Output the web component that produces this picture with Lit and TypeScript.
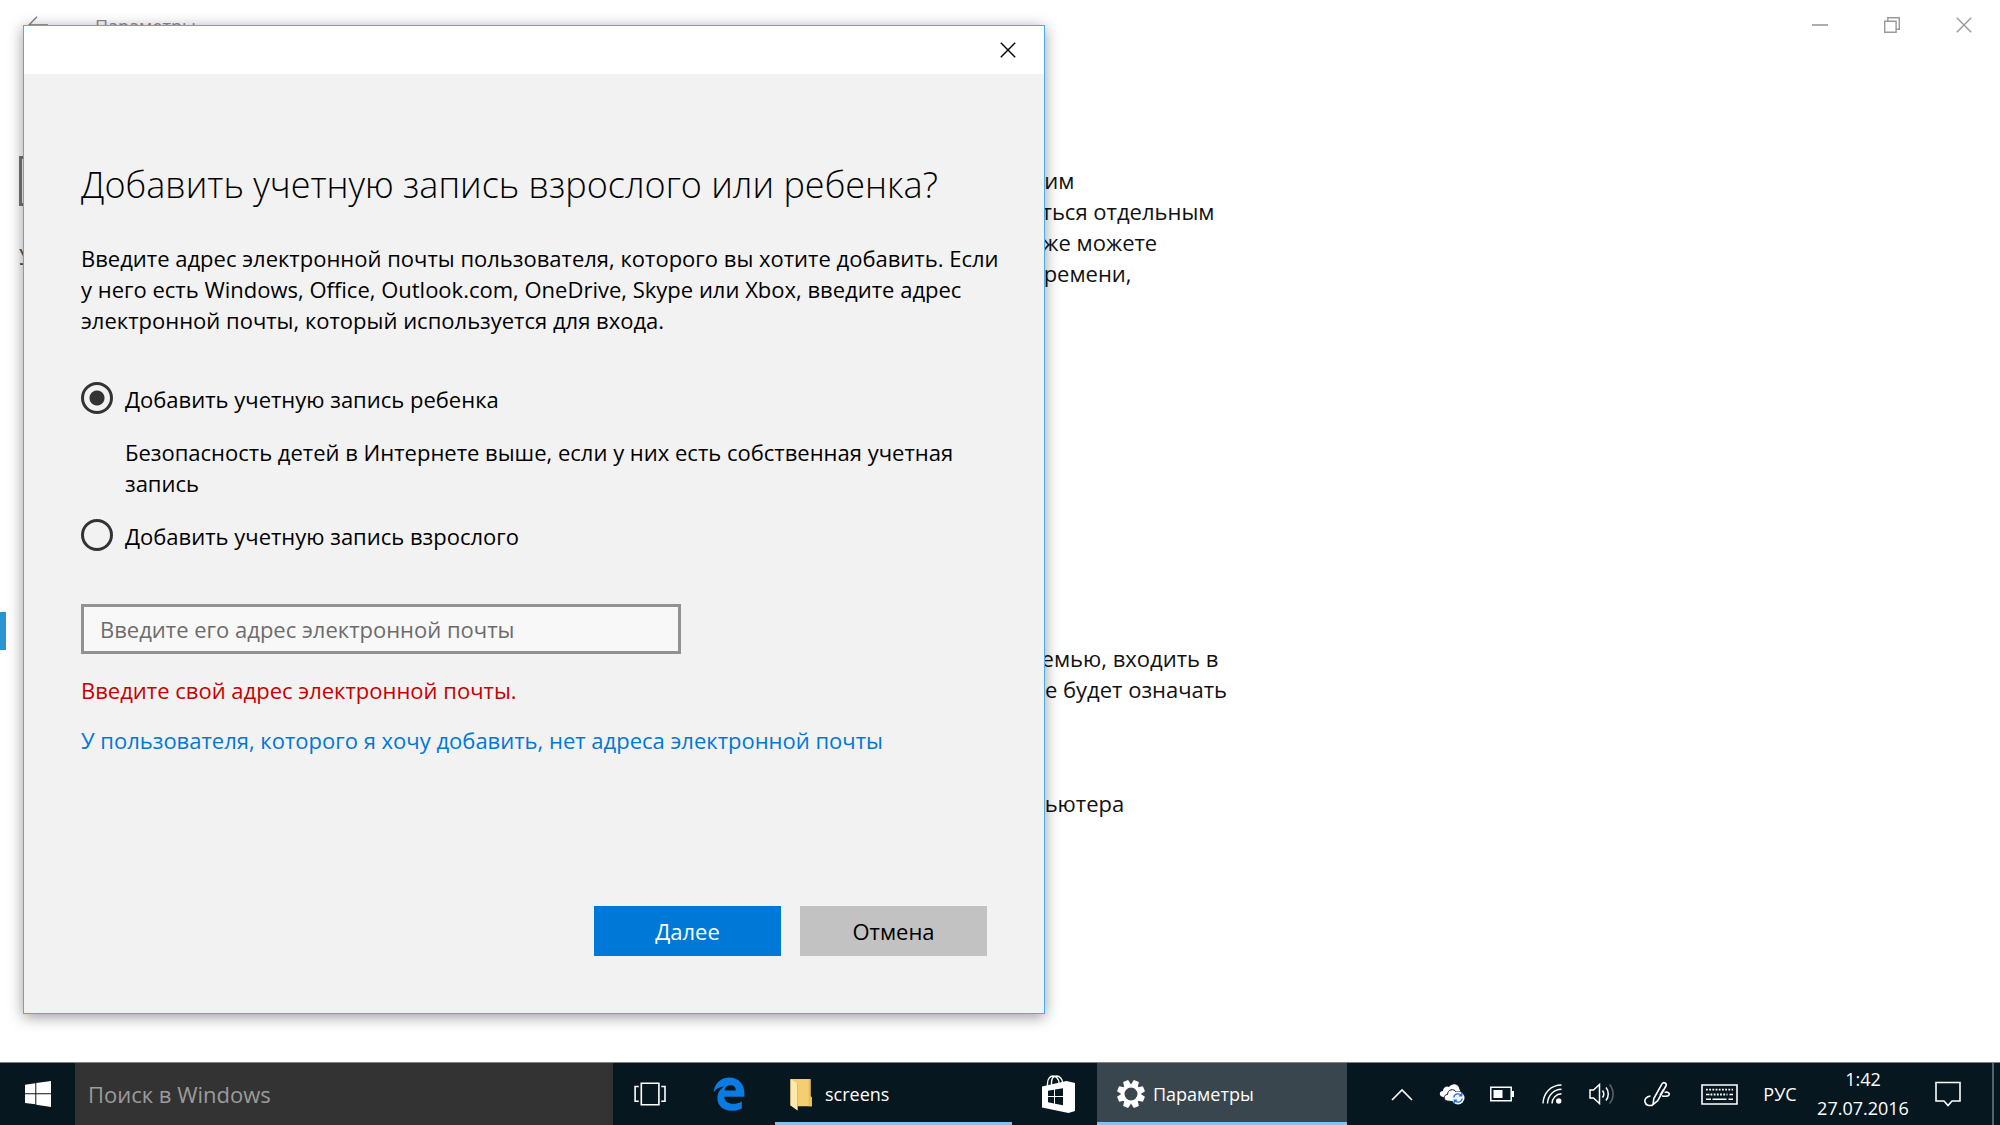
import { LitElement, html, css, svg } from "lit";
import { customElement, state } from "lit/decorators.js";

const closeIcon = html`<svg class="glyph" width="16" height="16" viewBox="0 0 16 16" aria-hidden="true">
  <path d="M.8.8 15.2 15.2M15.2.8.8 15.2" fill="none" stroke="currentColor" stroke-width="1.4" />
</svg>`;

@customElement("settings-window")
class SettingsWindow extends LitElement {
  static styles = css`
    :host {
      display: flex;
      flex-direction: column;
      height: 100%;
      background: #fff;
      font-size: 22px;
      line-height: 31px;
      color: #111;
    }
    .title-bar {
      display: flex;
      align-items: center;
      height: 50px;
      color: #8c8c8c;
      font-size: 18px;
    }
    .title-bar button {
      display: flex;
      align-items: center;
      justify-content: center;
      width: 72px;
      height: 50px;
      padding: 0;
      border: 0;
      background: none;
      color: #999;
    }
    .title-bar .back {
      width: 75px;
      color: #808080;
    }
    .title {
      flex: 1;
      margin: 0 0 0 20px;
      padding-top: 2px;
      font-size: 18px;
      font-weight: 400;
    }
    .columns {
      display: grid;
      grid-template-columns: 1031px 1fr;
    }
    .nav {
      padding-top: 106px;
    }
    .find {
      display: block;
      box-sizing: border-box;
      width: 480px;
      height: 50px;
      margin-left: 19px;
      border: 3px solid #777;
      background: #fff;
    }
    .section {
      margin: 35px 0 0 19px;
      font-size: 22px;
      font-weight: 400;
      color: #555;
    }
    .current {
      width: 6px;
      height: 38px;
      margin-top: 340px;
      background: #2a93d0;
    }
    .content {
      padding-top: 115px;
      white-space: nowrap;
    }
    .content p {
      margin: 0;
    }
    .content .others {
      margin-top: 354px;
    }
    .content .device {
      margin-top: 83px;
    }
  `;

  render() {
    return html`
      <header class="title-bar">
        <button class="back" aria-label="Назад">
          <svg width="20" height="18" viewBox="0 0 20 18" aria-hidden="true">
            <path d="M9 .8.9 9 9 17.2M1 9h19" fill="none" stroke="currentColor" stroke-width="1.4" />
          </svg>
        </button>
        <h1 class="title">Параметры</h1>
        <button aria-label="Свернуть">
          <svg width="16" height="16" viewBox="0 0 16 16" aria-hidden="true">
            <path d="M0 8h16" stroke="currentColor" stroke-width="1.6" />
          </svg>
        </button>
        <button aria-label="Свернуть в окно">
          <svg width="16" height="16" viewBox="0 0 16 16" aria-hidden="true">
            <path d="M.7 4.2h11.4v11.1H.7zM3.8 4V.8h11.5v11.4h-3" fill="none" stroke="currentColor" stroke-width="1.4" />
          </svg>
        </button>
        <button aria-label="Закрыть">${closeIcon}</button>
      </header>
      <div class="columns">
        <nav class="nav">
          <input class="find" type="search" aria-label="Найти параметр" />
          <h2 class="section">У</h2>
          <div class="current"></div>
        </nav>
        <main class="content">
          <p>оим<br />сться отдельным<br />кже можете<br />времени,</p>
          <p class="others">семью, входить в<br />не будет означать</p>
          <p class="device">пьютера</p>
        </main>
      </div>
    `;
  }
}

@customElement("account-dialog")
class AccountDialog extends LitElement {
  @state() private kind = "child";

  static styles = css`
    :host {
      display: block;
      box-sizing: border-box;
      border: 1px solid #4aaee8;
      background: #f2f2f2;
      box-shadow: 0 3px 14px rgba(0, 0, 0, 0.4);
      font-size: 22px;
      line-height: 31px;
      color: #000;
    }
    .bar {
      display: flex;
      justify-content: flex-end;
      background: #fff;
    }
    .close {
      display: flex;
      align-items: center;
      justify-content: center;
      width: 72px;
      height: 48px;
      padding: 0;
      border: 0;
      background: none;
      color: #000;
    }
    .body {
      padding: 87px 57px 57px;
    }
    h2 {
      margin: 0 0 34px;
      font-size: 36px;
      line-height: 48px;
      font-weight: 300;
    }
    p {
      margin: 0;
    }
    .intro {
      margin-right: -36px;
    }
    .choices {
      margin: 48px 0 52px;
      padding: 0;
      border: 0;
    }
    .choice {
      display: flex;
      align-items: center;
      gap: 12px;
    }
    .choice input {
      appearance: none;
      box-sizing: border-box;
      flex: none;
      width: 32px;
      height: 32px;
      margin: -4px 0 0;
      border: 3px solid #333;
      border-radius: 50%;
    }
    .choice input:checked {
      background: radial-gradient(circle, #333 7px, transparent 8px);
    }
    .hint {
      margin: 22px 0 22px 44px;
    }
    .mail {
      display: block;
      box-sizing: border-box;
      width: 600px;
      max-width: 100%;
      height: 50px;
      padding: 0 16px;
      border: 3px solid #929292;
      border-radius: 0;
      background: #f8f8f8;
      font: inherit;
      color: #000;
    }
    .mail::placeholder {
      color: #6c6c6c;
      opacity: 1;
    }
    .error {
      margin: 21px 0 19px;
      color: #c80000;
    }
    a {
      color: #0078d7;
      text-decoration: none;
    }
    .actions {
      display: flex;
      justify-content: flex-end;
      gap: 19px;
      margin-top: 150px;
    }
    .actions button {
      width: 187px;
      height: 50px;
      padding: 0;
      border: 0;
      background: #c2c2c2;
      font: inherit;
      color: #000;
    }
    .actions .primary {
      background: #0078d7;
      color: #fff;
    }
  `;

  private pick(kind: string) {
    this.kind = kind;
  }

  render() {
    return html`
      <div class="bar"><button class="close" aria-label="Закрыть">${closeIcon}</button></div>
      <form class="body" @submit=${(e: Event) => e.preventDefault()}>
        <h2>Добавить учетную запись взрослого или ребенка?</h2>
        <p class="intro">
          Введите адрес электронной почты пользователя, которого вы хотите добавить. Если<br />
          у него есть Windows, Office, Outlook.com, OneDrive, Skype или Xbox, введите адрес<br />
          электронной почты, который используется для входа.
        </p>
        <fieldset class="choices" aria-label="Тип учетной записи">
          <label class="choice">
            <input type="radio" name="kind" .checked=${this.kind === "child"} @change=${() => this.pick("child")} />
            Добавить учетную запись ребенка
          </label>
          <p class="hint">Безопасность детей в Интернете выше, если у них есть собственная учетная запись</p>
          <label class="choice">
            <input type="radio" name="kind" .checked=${this.kind === "adult"} @change=${() => this.pick("adult")} />
            Добавить учетную запись взрослого
          </label>
        </fieldset>
        <input
          class="mail"
          type="email"
          aria-label="Введите его адрес электронной почты"
          placeholder="Введите его адрес электронной почты"
        />
        <p class="error">Введите свой адрес электронной почты.</p>
        <a href="#no-mail">У пользователя, которого я хочу добавить, нет адреса электронной почты</a>
        <div class="actions">
          <button class="primary" type="submit">Далее</button>
          <button type="button">Отмена</button>
        </div>
      </form>
    `;
  }
}

/* A gear outline with eight teeth around a ring. */
const teeth = [0, 45, 90, 135, 180, 225, 270, 315].map(
  (a) => svg`<path d="M-3.6-9 -2.7-14h5.4l.9 5z" transform="rotate(${a + 22.5})" />`
);

@customElement("task-bar")
class TaskBar extends LitElement {
  static styles = css`
    :host {
      display: flex;
      height: 62px;
      border-top: 1px solid #7d8387;
      background: #071720;
      color: #fff;
      font-size: 18px;
      line-height: 29px;
    }
    button {
      display: flex;
      align-items: center;
      justify-content: center;
      flex: none;
      box-sizing: border-box;
      height: 62px;
      padding: 0;
      border: 0;
      background: none;
      color: inherit;
      font: inherit;
    }
    .start {
      width: 75px;
    }
    .search {
      flex: 0 1 538px;
      box-sizing: border-box;
      min-width: 120px;
      height: 62px;
      padding: 0 13px;
      border: 0;
      border-radius: 0;
      background: #333;
      color: #fff;
      font: inherit;
      font-size: 22px;
    }
    .search::placeholder {
      color: #9b9b9b;
      opacity: 1;
    }
    .view {
      width: 74px;
    }
    .edge {
      width: 84px;
    }
    .store {
      width: 85px;
    }
    .app {
      justify-content: flex-start;
      border-bottom: 3px solid #76c7f7;
      padding-top: 3px;
    }
    .folder {
      width: 237px;
      gap: 12px;
      margin-left: 4px;
      padding-left: 15px;
    }
    .settings {
      width: 250px;
      gap: 8px;
      padding-left: 20px;
      background: #3a464d;
    }
    .tray {
      display: flex;
      flex: none;
      margin-left: auto;
    }
    .tray button {
      width: 50px;
    }
    .tray .pen,
    .tray .notes {
      width: 60px;
    }
    .tray .keys {
      width: 65px;
    }
    .tray .lang {
      width: 56px;
    }
    .tray .clock {
      width: 110px;
      flex-direction: column;
    }
    .tray .desktop {
      width: 8px;
      margin-left: 14px;
      border-left: 2px solid #56626a;
    }
  `;

  render() {
    return html`
      <button class="start" aria-label="Пуск">
        <svg width="26" height="26" viewBox="0 0 26 26" fill="#fff" aria-hidden="true">
          <path d="M0 3.8 10.3 2.3v10H0zM11.3 2.1 26 0v12.3H11.3zM0 13.3h10.3v10L0 21.9zM11.3 13.3H26V26l-14.7-2.2z" />
        </svg>
      </button>
      <input class="search" type="search" aria-label="Поиск в Windows" placeholder="Поиск в Windows" />
      <button class="view" aria-label="Представление задач">
        <svg width="32" height="24" viewBox="0 0 32 24" fill="none" stroke="#fff" stroke-width="1.6" aria-hidden="true">
          <path d="M7.3 1.3h17.6v21.4H7.3zM4.8 4.5H1.1v14.7h3.7M27.3 4.5H31v14.7h-3.7" />
        </svg>
      </button>
      <button class="edge" aria-label="Microsoft Edge">
        <svg width="32" height="34" viewBox="0 0 32 34" fill="#0a7be0" aria-hidden="true">
          <path
            d="M.5 15.2C1.7 6.3 8 .6 16.2.6c9.300 0 15.200 6.500 15.200 15.500v3.700H11.300c.4 5 4 7 8.800 7 3.300 0 6.200-.9 8.700-2.300v7c-2.800 1.500-6.100 2.300-9.900 2.300C10 33.800 4.400 28.500 4.400 21c0-5.200 2.500-9 6.800-11.600C6.500 9.700 3 11.800.5 15.200zM11.400 13.600h11.400c0-3.600-1.800-5.300-5.100-5.300-3.500 0-5.700 2-6.300 5.300z"
          />
        </svg>
      </button>
      <button class="app folder">
        <svg width="23" height="33" viewBox="0 0 23 33" aria-hidden="true">
          <path d="M.5 1h20v17.500l1.500 1v8.700H7.500L.5 27.500z" fill="#f3cf72" />
          <path d="M20.500 18v-17l-2 0v27.200h3.500v-8.700z" fill="#eabf5c" />
          <path d="M.5 1 7.500 5.500v27L.5 27.500z" fill="#ffe9a8" />
          <path d="M7.500 5.500v27" stroke="#dcae48" stroke-width=".7" />
        </svg>
        screens
      </button>
      <button class="store" aria-label="Магазин">
        <svg width="42" height="38" viewBox="0 0 42 38" aria-hidden="true">
          <path
            d="M13.500 12V8.500C13.500 4 16 1 19 1s6 3 6 7M17.500 10V8c0-4.500 2-7 5-7 3.200 0 6 3 6 7"
            fill="none" stroke="#fff" stroke-width="1.400"
          />
          <path d="M8 11.500 32.500 6 41 8v28l-6.500 2L8 32.500z" fill="#fff" />
          <path
            d="m14 15.700 6-1v6.400h-6zM21 14.500l8-1.300v7.900h-8zM14 22h6v6.500l-6-1.200zM21 22h8v8.200l-8-1.500z"
            fill="#071720"
          />
        </svg>
      </button>
      <button class="app settings">
        <svg width="28" height="28" viewBox="-14 -14 28 28" fill="#fff" aria-hidden="true">
          <circle r="8.300" fill="none" stroke="#fff" stroke-width="3.600" />
          ${teeth}
        </svg>
        Параметры
      </button>
      <div class="tray">
        <button aria-label="Отображать скрытые значки">
          <svg width="22" height="13" viewBox="0 0 22 13" aria-hidden="true">
            <path d="M1 12 11 2l10 10" fill="none" stroke="#fff" stroke-width="1.600" />
          </svg>
        </button>
        <button aria-label="OneDrive">
          <svg width="26" height="22" viewBox="0 0 26 22" aria-hidden="true">
            <path d="M4 14C-.5 13 0 8 4 8c0-4 4-5.500 6-4 3-4 9-3.500 10 1l2 5-12 6z" fill="#fff" />
            <path
              d="M8 18c-4-1-3.500-6.500.5-6.500C8.500 6.500 15 5 17 9c4-1.500 7 1 6.500 4L18 19z"
              fill="#fff" stroke="#071720" stroke-width="1"
            />
            <circle cx="19" cy="15" r="6.500" fill="#f4f7fb" />
            <path
              d="M14.800 14.500c.6-4 5.600-4.800 7.600-2M23.200 15.500c-.6 4-5.600 4.800-7.600 2M22.800 9.800v3h-3M15.200 20.200v-3h3"
              fill="none" stroke="#2474d8" stroke-width="1.300"
            />
          </svg>
        </button>
        <button aria-label="Батарея">
          <svg width="24" height="16" viewBox="0 0 24 16" aria-hidden="true">
            <path d="M.8 1.300h20.400v13.400H.8z" fill="none" stroke="#fff" stroke-width="1.500" />
            <path d="M3.500 4h9v8h-9zM21.500 5H24v6h-2.500z" fill="#fff" />
          </svg>
        </button>
        <button aria-label="Сеть">
          <svg width="20" height="20" viewBox="0 0 20 20" aria-hidden="true">
            <path
              d="M1 19.500C1.300 9 9 1 19.500 1M5.500 19.500C5.800 11.500 11.500 5.500 19.500 5.300M10 19.500c.2-5.500 4-9.500 9.500-9.700"
              fill="none" stroke="#fff" stroke-width="1.400"
            />
            <circle cx="16.700" cy="17" r="2.700" fill="#fff" />
          </svg>
        </button>
        <button aria-label="Громкость">
          <svg width="26" height="22" viewBox="0 0 26 22" fill="none" stroke="#fff" stroke-width="1.500" aria-hidden="true">
            <path d="M1 7h3.500l6-5.500v19L4.500 15H1zM13.500 7.500c1.500 2 1.500 5 0 7M17 4.500c3 3.500 3 9.500 0 13" />
            <path d="M20.500 1.500c4.800 5.500 4.800 13.500 0 19" stroke="#59666d" />
          </svg>
        </button>
        <button class="pen" aria-label="Рабочая область Windows Ink">
          <svg width="26" height="26" viewBox="0 0 26 26" fill="none" stroke="#fff" stroke-width="1.600" aria-hidden="true">
            <path
              d="M9 23.500 9.800 17.500 18 2.800c1.600-2.600 5.300-.4 3.900 2.200L13.700 19.700zM19.500 8.500 16 14.500M6.500 15C2 15.500.5 18.500 1 21c.6 3.500 4.500 4 8 3M20.500 11.500c3-1 5.500.5 4.500 2.500-.8 1.500-3.500 1.500-7 1"
            />
          </svg>
        </button>
        <button class="keys" aria-label="Сенсорная клавиатура">
          <svg width="37" height="21" viewBox="0 0 37 21" fill="none" stroke="#fff" aria-hidden="true">
            <path d="M1 1h35v19H1z" stroke-width="1.600" />
            <path d="M5 5.700h27M9.500 10.500h17" stroke-width="1.800" stroke-dasharray="1.800 1.400" />
            <path d="M5 10.500h3.500M28.500 10.500H32M5 15.300h5M11.500 15.300h14M27.500 15.300H32" stroke-width="1.600" />
          </svg>
        </button>
        <button class="lang">РУС</button>
        <button class="clock"><span>1:42</span><span>27.07.2016</span></button>
        <button class="notes" aria-label="Центр уведомлений">
          <svg width="26" height="26" viewBox="0 0 26 26" aria-hidden="true">
            <path d="M1 1.500h24v18.500h-8l-4 4.500-4-4.500H1z" fill="none" stroke="#fff" stroke-width="1.600" />
          </svg>
        </button>
        <button class="desktop" aria-label="Свернуть все окна"></button>
      </div>
    `;
  }
}

@customElement("app-root")
class AppRoot extends LitElement {
  static styles = css`
    :host {
      display: flex;
      flex-direction: column;
      min-height: 100vh;
      font-family: "Open Sans", "Noto Sans", sans-serif;
    }
    .desktop {
      position: relative;
      flex: 1;
      overflow: hidden;
    }
    account-dialog {
      position: absolute;
      top: 25px;
      left: 23px;
      width: calc(100% - 46px);
      max-width: 1022px;
    }
  `;

  render() {
    return html`
      <div class="desktop">
        <settings-window></settings-window>
        <account-dialog role="dialog" aria-label="Добавить учетную запись"></account-dialog>
      </div>
      <task-bar></task-bar>
    `;
  }
}
